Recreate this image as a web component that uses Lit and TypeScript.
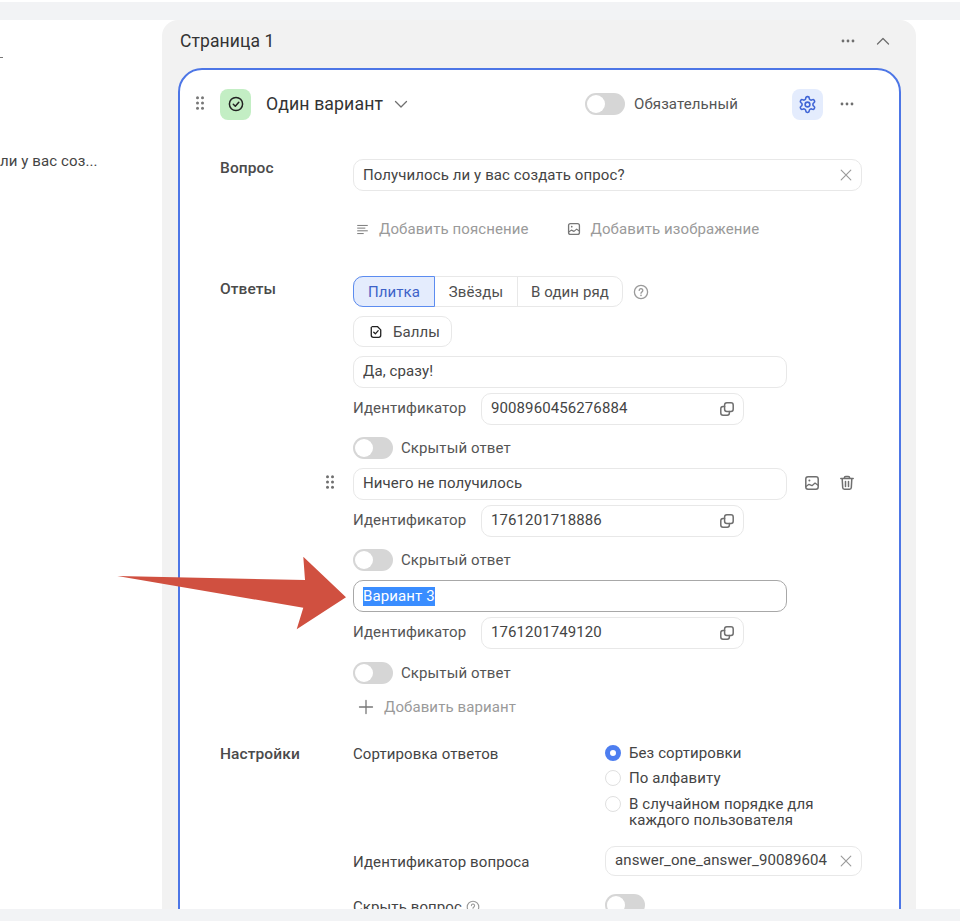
import { LitElement, html, css, svg } from "lit";
import { customElement } from "lit/decorators.js";

const ic = (size: number, body: unknown, cls = "") => html`<svg class="ic ${cls}" width=${size} height=${size} viewBox="0 0 16 16" fill="none" stroke="currentColor" stroke-width="1.5" stroke-linecap="round" stroke-linejoin="round">${body}</svg>`;

const dots = ic(16, svg`<g fill="currentColor" stroke="none"><circle cx="3" cy="8" r="1.4"/><circle cx="8" cy="8" r="1.4"/><circle cx="13" cy="8" r="1.4"/></g>`);
const grip = ic(16, svg`<g fill="currentColor" stroke="none"><circle cx="5.5" cy="2.8" r="1.5"/><circle cx="10.5" cy="2.8" r="1.5"/><circle cx="5.5" cy="8" r="1.5"/><circle cx="10.5" cy="8" r="1.5"/><circle cx="5.5" cy="13.2" r="1.5"/><circle cx="10.5" cy="13.2" r="1.5"/></g>`);
const xmark = ic(14, svg`<path d="M2.5 2.5l11 11M13.5 2.5l-11 11" stroke-width="1.3"/>`);
const pictureBody = svg`<rect x="1.8" y="1.8" width="12.4" height="12.4" rx="2.2"/><circle cx="5.4" cy="5.4" r="1" fill="currentColor" stroke="none"/><path d="M2 11.5l3-2.2 3 1.4 3-2.6 3 2.2" stroke-width="1.3"/>`;
const copy = ic(16, svg`<rect x="5.6" y="1.8" width="8.6" height="8.6" rx="2.2"/><path d="M5.6 5.6H4A2.2 2.2 0 0 0 1.8 7.8V12A2.2 2.2 0 0 0 4 14.2h4.2a2.2 2.2 0 0 0 2.2-2.2v-1.6"/>`);
const trash = ic(16, svg`<path d="M1.8 3.6h12.4M5.2 3.4V3a1.6 1.6 0 0 1 1.6-1.4h2.4A1.6 1.6 0 0 1 10.8 3v.4M3.2 3.8l.5 8.8A1.7 1.7 0 0 0 5.4 14.3h5.2a1.7 1.7 0 0 0 1.7-1.7l.5-8.8M6.5 6.6v4.8M9.5 6.6v4.8"/>`);
const questionBody = svg`<circle cx="8" cy="8" r="6.6" stroke-width="1.3"/><path d="M6.2 6.4a1.8 1.8 0 1 1 2.8 1.5c-.6.4-1 .8-1 1.4" stroke-width="1.3"/><circle cx="8" cy="11.4" r=".8" fill="currentColor" stroke="none"/>`;

@customElement("app-root")
export class AppRoot extends LitElement {
  static styles = css`
    :host { display: block; height: 921px; overflow: hidden; position: relative; background: #fff;
      font-family: Roboto, "Noto Sans", sans-serif; font-size: 15px; letter-spacing: .1px; color: #444; }
    * { box-sizing: border-box; }
    .ic { display: block; flex: none; }
    .strip { height: 18px; margin-top: 2px; background: #f2f3f5; }
    .strip.bottom { height: 12px; margin-top: 0; }
    .main { height: 889px; overflow: hidden; display: flex; background: #fff; }
    .left { width: 162px; flex: none; white-space: nowrap; position: relative; padding-top: 132px; }
    .dash { width: 3px; height: 1px; background: #777; position: absolute; top: 37px; left: 0; }
    .leftline { line-height: 18px; }
    .panel { width: 754px; flex: none; background: #f2f2f2; border-radius: 16px 16px 0 0; padding: 0 15px 0 16px; }
    .ph { height: 48px; display: flex; align-items: center; padding: 0 2px; font-size: 17.5px; color: #333; }
    .ph .t { flex: 1; padding-bottom: 6px; }
    .ph .a { color: #6f6f6f; display: flex; align-items: center; gap: 19px; padding: 0 8px 6px 0; }
    .card { background: #fff; border: 2px solid #4d76e6; border-radius: 24px; height: 900px; padding: 18px 0 0 40px; }
    .top { display: flex; align-items: center; height: 32px; position: relative; }
    .top .grip { position: absolute; left: -28px; top: 7px; color: #777; }
    .tile { width: 31px; height: 31px; border-radius: 8px; background: #c3eec4; display: flex; align-items: center; justify-content: center; color: #222; }
    .kind { margin-left: 15px; font-size: 17.7px; font-weight: 400; color: #333; width: 117px; white-space: nowrap; padding-bottom: 1px; }
    .chev { margin-left: 10px; color: #6f6f6f; }
    .top .tg { margin-left: 176px; }
    .req { margin-left: 9px; width: 158px; color: #555; white-space: nowrap; }
    .gear { width: 31px; height: 31px; border-radius: 8px; background: #e4ecfd; color: #3f64d6; display: flex; align-items: center; justify-content: center; }
    .more { margin-left: 16px; color: #6f6f6f; }
    .row { display: grid; grid-template-columns: 133px 509px; }
    .lab { font-weight: 500; font-size: 15.5px; color: #4a4a4a; line-height: 18px; }
    .r1 { margin-top: 39px; }
    .field { height: 32px; border: 1px solid #e8e8e8; border-radius: 10px; display: flex; align-items: center; padding: 0 8px 0 9px; color: #444; background: #fff; white-space: nowrap; }
    .field.sel { border-color: #a8a8a8; }
    .grow { flex: 1; overflow: hidden; padding-bottom: 2px; }
    .field.sel .grow, .field.q .grow { padding-bottom: 0; }
    .x { color: #9a9a9a; }
    .hl { background: #3a8dff; color: #fff; display: inline-block; line-height: 19px; }
    .adds { display: flex; align-items: center; height: 20px; margin-top: 28px; color: #9a9a9a; padding-left: 3px; }
    .adds .ic { color: #777; }
    .adds span { margin-left: 10px; }
    .adds .b2 { margin-left: 38px; display: flex; align-items: center; }
    .seg { display: flex; align-items: center; height: 31px; }
    .segbox { display: flex; height: 31px; border: 1px solid #e8e8e8; border-radius: 10px; width: 270px; }
    .segbox div { display: flex; align-items: center; justify-content: center; border-left: 1px solid #e8e8e8; color: #4f4f4f; }
    .segbox .on { width: 82px; margin: -1px 0 -1px -1px; height: 31px; border: 1px solid #5c8cf0; background: #e4ecfd; color: #3d62c8; border-radius: 10px 0 0 10px; }
    .segbox .s2 { width: 82px; border-left: 0; } .segbox .s3 { flex: 1; }
    .help { margin-left: 10px; color: #9a9a9a; }
    .score { width: 99px; height: 31px; margin-top: 9px; border: 1px solid #e8e8e8; border-radius: 10px; display: flex; align-items: center; padding-left: 15px; gap: 10px; color: #4a4a4a; }
    .score .ic { color: #222; }
    .answers { margin-top: 9px; }
    .ans { position: relative; height: 112px; }
    .ans.last { height: 113px; }
    .ans.last .togr { margin-top: 13px; }
    .ans .field.main-f { width: 434px; }
    .ans .grip { position: absolute; left: -31px; top: 6px; color: #6f6f6f; }
    .ans .tools { position: absolute; left: 451px; top: 7px; display: flex; gap: 19px; color: #6f6f6f; }
    .idr { display: flex; align-items: center; margin-top: 5px; height: 32px; color: #555; }
    .idr .n { width: 128px; white-space: nowrap; padding-bottom: 3px; }
    .idr .field { width: 263px; height: 32px; }
    .idr .ic { color: #6f6f6f; }
    .togr { display: flex; align-items: center; gap: 8px; margin-top: 12px; color: #555; height: 22px; }
    .tg { width: 40px; height: 22px; border-radius: 11px; background: #d6d6d6; position: relative; flex: none; }
    .tg::after { content: ""; position: absolute; left: 2px; top: 2px; width: 18px; height: 18px; border-radius: 50%; background: #fff; }
    .addv { display: flex; align-items: center; margin: 4px 0 0 5px; height: 20px; gap: 10px; color: #9a9a9a; }
    .addv .ic { color: #777; }
    .set { display: grid; grid-template-columns: 252px 257px; color: #444; }
    .radios { display: flex; flex-direction: column; gap: 9px; }
    .radio { display: flex; gap: 8px; line-height: 16px; color: #444; }
    .radio.wrapped { margin-top: 1px; }
    .dot { width: 16px; height: 16px; border-radius: 50%; border: 1px solid #e0e0e0; flex: none; background: #fff; }
    .dot.on { border: 5px solid #4d7ef0; }
    .set2 { display: grid; grid-template-columns: 252px 257px; align-items: center; margin-top: 18px; height: 30px; }
    .set2 .lb { padding-top: 2px; }
    .set2 .field { height: 30px; }
    .set3 { display: grid; grid-template-columns: 252px 257px; margin-top: 18px; align-items: center; }
    .hide { display: flex; align-items: center; gap: 4px; padding-top: 3px; }
    .arrow { position: absolute; left: 0; top: 0; pointer-events: none; }
  `;

  ans(label: unknown, id: string, opts: { hover?: boolean; sel?: boolean } = {}) {
    return html`<div class="ans ${opts.sel ? "last" : ""}">
      ${opts.hover ? html`<div class="grip">${grip}</div><div class="tools">${ic(16, pictureBody)}${trash}</div>` : ""}
      <div class="field main-f ${opts.sel ? "sel" : ""}"><span class="grow">${label}</span></div>
      <div class="idr"><div class="n">Идентификатор</div><div class="field"><span class="grow">${id}</span>${copy}</div></div>
      <div class="togr"><div class="tg"></div><span>Скрытый ответ</span></div>
    </div>`;
  }

  render() {
    return html`
      <div class="strip"></div>
      <div class="main">
        <div class="left"><div class="dash"></div><div class="leftline">ли у вас соз...</div></div>
        <div class="panel">
          <div class="ph"><div class="t">Страница 1</div><div class="a">${dots}${ic(16, svg`<path d="M2.5 11L8 5.5 13.5 11" stroke-width="1.3"/>`)}</div></div>
          <div class="card">
            <div class="top">
              <div class="grip">${grip}</div>
              <div class="tile">${ic(16, svg`<circle cx="8" cy="8" r="6.6"/><path d="M5.3 8.2l2 2 3.5-4"/>`)}</div>
              <div class="kind">Один вариант</div>
              <div class="chev">${ic(16, svg`<path d="M2.5 5.5L8 11l5.5-5.5" stroke-width="1.3"/>`)}</div>
              <div class="tg"></div>
              <div class="req">Обязательный</div>
              <div class="gear"><svg class="ic" width="19" height="19" viewBox="0 0 24 24" fill="none" stroke="currentColor" stroke-width="2" stroke-linecap="round" stroke-linejoin="round"><path d="M12.22 2h-.44a2 2 0 0 0-2 2v.18a2 2 0 0 1-1 1.73l-.43.25a2 2 0 0 1-2 0l-.15-.08a2 2 0 0 0-2.73.73l-.22.38a2 2 0 0 0 .73 2.73l.15.1a2 2 0 0 1 1 1.72v.51a2 2 0 0 1-1 1.74l-.15.09a2 2 0 0 0-.73 2.73l.22.38a2 2 0 0 0 2.73.73l.15-.08a2 2 0 0 1 2 0l.43.25a2 2 0 0 1 1 1.73V20a2 2 0 0 0 2 2h.44a2 2 0 0 0 2-2v-.18a2 2 0 0 1 1-1.73l.43-.25a2 2 0 0 1 2 0l.15.08a2 2 0 0 0 2.73-.73l.22-.39a2 2 0 0 0-.73-2.73l-.15-.08a2 2 0 0 1-1-1.74v-.5a2 2 0 0 1 1-1.74l.15-.09a2 2 0 0 0 .73-2.73l-.22-.38a2 2 0 0 0-2.73-.73l-.15.08a2 2 0 0 1-2 0l-.43-.25a2 2 0 0 1-1-1.73V4a2 2 0 0 0-2-2z"/><circle cx="12" cy="12" r="3"/></svg></div>
              <div class="more">${dots}</div>
            </div>
            <div class="row r1">
              <div class="lab">Вопрос</div>
              <div>
                <div class="field q"><span class="grow">Получилось ли у вас создать опрос?</span><span class="x">${xmark}</span></div>
                <div class="adds">${ic(13, svg`<path d="M2 3h12M2 6.3h9M2 9.6h12M2 13h7" stroke-width="1.2"/>`)}<span>Добавить пояснение</span><div class="b2">${ic(14, pictureBody)}<span>Добавить изображение</span></div></div>
              </div>
            </div>
            <div class="row" style="margin-top:37px">
              <div class="lab" style="padding-top:4px">Ответы</div>
              <div>
                <div class="seg"><div class="segbox"><div class="on">Плитка</div><div class="s2">Звёзды</div><div class="s3">В один ряд</div></div><div class="help">${ic(16, questionBody)}</div></div>
                <div class="score">${ic(14, svg`<path d="M3.6 1.8h6L13.4 5.6v6.2a2.4 2.4 0 0 1-2.4 2.4H5a2.4 2.4 0 0 1-2.4-2.4V2.8"/><path d="M5.4 8.2l1.9 1.9 3.2-3.6"/>`)}<span>Баллы</span></div>
                <div class="answers">
                  ${this.ans("Да, сразу!", "9008960456276884")}
                  ${this.ans("Ничего не получилось", "1761201718886", { hover: true })}
                  ${this.ans(html`<span class="hl">Вариант 3</span>`, "1761201749120", { sel: true })}
                </div>
                <div class="addv">${ic(16, svg`<path d="M8 1.5v13M1.5 8h13" stroke-width="1.3"/>`)}<span>Добавить вариант</span></div>
              </div>
            </div>
            <div class="row" style="margin-top:19px">
              <div class="lab" style="padding-top:9px">Настройки</div>
              <div style="padding-top:9px">
                <div class="set">
                  <div style="line-height:18px">Сортировка ответов</div>
                  <div class="radios">
                    <div class="radio"><div class="dot on"></div><div>Без сортировки</div></div>
                    <div class="radio"><div class="dot"></div><div>По алфавиту</div></div>
                    <div class="radio wrapped"><div class="dot"></div><div>В случайном порядке для<br />каждого пользователя</div></div>
                  </div>
                </div>
                <div class="set2"><div class="lb">Идентификатор вопроса</div><div class="field"><span class="grow">answer_one_answer_90089604</span><span class="x" style="margin-left:8px">${xmark}</span></div></div>
                <div class="set3"><div class="hide">Скрыть вопрос <span style="color:#9a9a9a">${ic(14, questionBody)}</span></div><div class="tg"></div></div>
              </div>
            </div>
          </div>
        </div>
      </div>
      <div class="strip bottom"></div>
      <svg class="arrow" width="960" height="921"><polygon points="117.3,576 305,580 303.3,556.7 346,597.3 296.7,629.3 303.3,607.7" fill="#d05040"/></svg>
    `;
  }
}
